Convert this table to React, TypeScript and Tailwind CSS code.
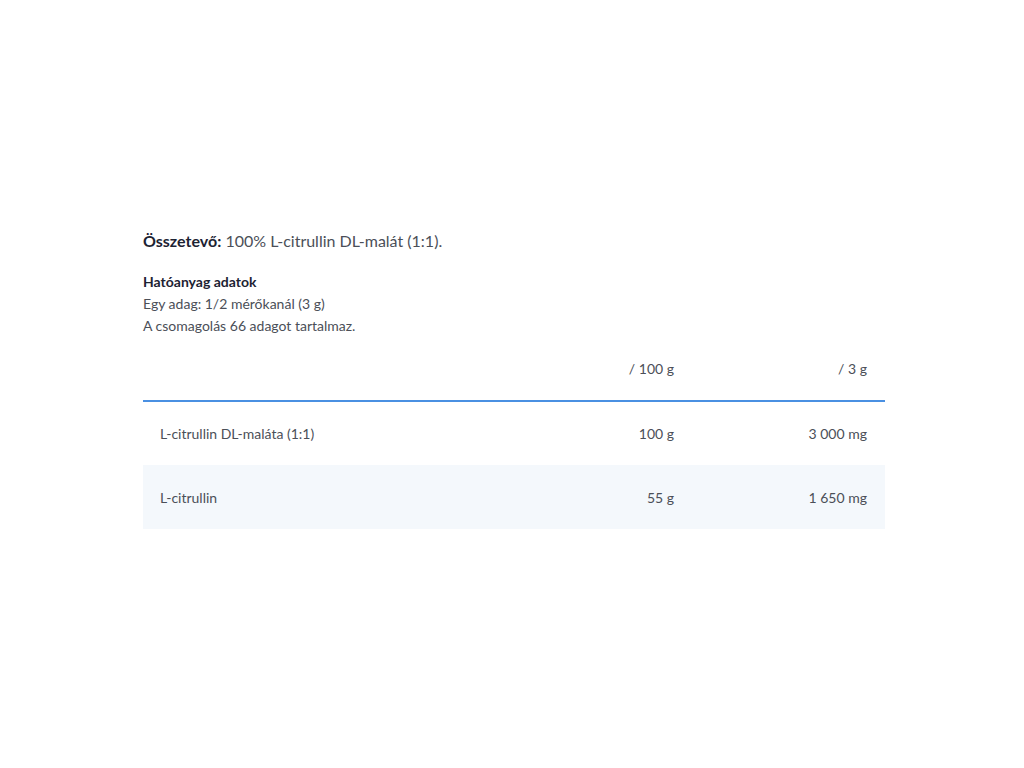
const rows = [
  { name: 'L-citrullin DL-maláta (1:1)', per100: '100 g', perServing: '3 000 mg' },
  { name: 'L-citrullin', per100: '55 g', perServing: '1 650 mg' },
]

export default function App() {
  return (
    <div className="min-h-[768px] bg-white font-['Lato',_'Noto_Sans',_sans-serif] text-[#4b4f58]">
      <div className="ml-[143px] w-[742px] pt-[229px]">
        <p className="text-[16px] leading-6">
          <span className="font-bold text-[#1d2333]">Összetevő:</span> 100% L-citrullin DL-malát (1:1).
        </p>

        <div className="mt-[18px] text-[14px] leading-[22px]">
          <p className="font-bold text-[#1d2333]">Hatóanyag adatok</p>
          <p>Egy adag: 1/2 mérőkanál (3 g)</p>
          <p>A csomagolás 66 adagot tartalmaz.</p>
        </div>

        <table className="mt-[15px] w-full text-[14px]">
          <thead>
            <tr className="border-b-2 border-[#4a90e2]">
              <th className="h-[49px] pl-[17px] text-left font-normal"></th>
              <th className="h-[49px] w-[200px] pb-[15px] text-right font-normal">/ 100 g</th>
              <th className="h-[49px] w-[211px] pb-[15px] pr-[18px] text-right font-normal">/ 3 g</th>
            </tr>
          </thead>
          <tbody>
            {rows.map((r, i) => (
              <tr key={r.name} className={i % 2 === 1 ? 'bg-[#f4f8fc]' : ''}>
                <td className="h-[64px] pl-[17px] text-left">{r.name}</td>
                <td className="h-[64px] text-right">{r.per100}</td>
                <td className="h-[64px] pr-[18px] text-right">{r.perServing}</td>
              </tr>
            ))}
          </tbody>
        </table>
      </div>
    </div>
  )
}
